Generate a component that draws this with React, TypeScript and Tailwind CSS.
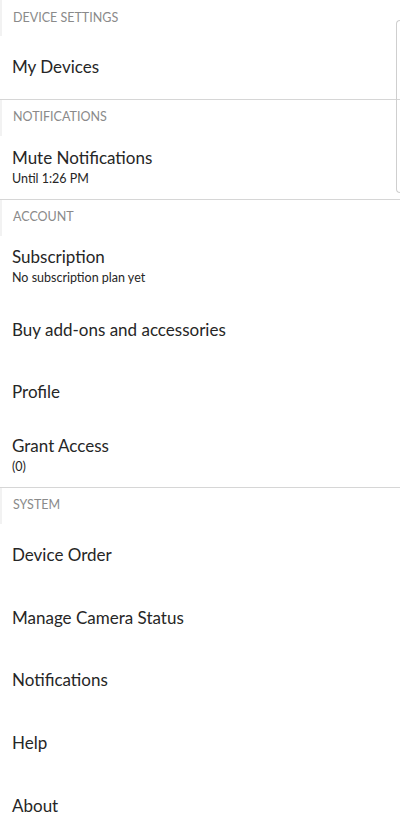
import React from 'react';

type Item = { title: string; sub?: string };
type Section = { header: string; items: Item[]; divider?: boolean };

const sections: Section[] = [
    { header: 'DEVICE SETTINGS', items: [{ title: 'My Devices' }], divider: true },
    {
        header: 'NOTIFICATIONS',
        items: [{ title: 'Mute Notifications', sub: 'Until 1:26 PM' }],
        divider: true,
    },
    {
        header: 'ACCOUNT',
        items: [
            { title: 'Subscription', sub: 'No subscription plan yet' },
            { title: 'Buy add-ons and accessories' },
            { title: 'Profile' },
            { title: 'Grant Access', sub: '(0)' },
        ],
        divider: true,
    },
    {
        header: 'SYSTEM',
        items: [
            { title: 'Device Order' },
            { title: 'Manage Camera Status' },
            { title: 'Notifications' },
            { title: 'Help' },
            { title: 'About' },
        ],
    },
];

const Row = ({ item }: { item: Item }) => (
    <div className="h-[62.75px] flex flex-col justify-center px-3">
        <div className="text-[17px] leading-[22px] text-[#262626]">{item.title}</div>
        {item.sub && (
            <div className="text-[12.5px] leading-[19px] text-[#262626]">{item.sub}</div>
        )}
    </div>
);

export default function App() {
    return (
        <div
            className="relative w-[400px] h-[838px] overflow-hidden bg-white"
            style={{ fontFamily: 'Lato, "Noto Sans", sans-serif' }}
        >
            {sections.map((s) => (
                <div key={s.header} className={s.divider ? 'border-b border-[#d6d6d6]' : ''}>
                    <div className="h-[36px] flex items-center pl-[11px] pr-3 border-l-2 border-[#f2f2f2] text-[12.5px] text-[#8a8a8a]">
                        {s.header}
                    </div>
                    {s.items.map((it) => (
                        <Row key={it.title} item={it} />
                    ))}
                </div>
            ))}
            {/* scroll indicator on the right edge */}
            <div className="absolute right-0 top-[20px] h-[173px] w-[4px] border border-r-0 border-[#cfcfcf] rounded-l-[4px]" />
        </div>
    );
}
